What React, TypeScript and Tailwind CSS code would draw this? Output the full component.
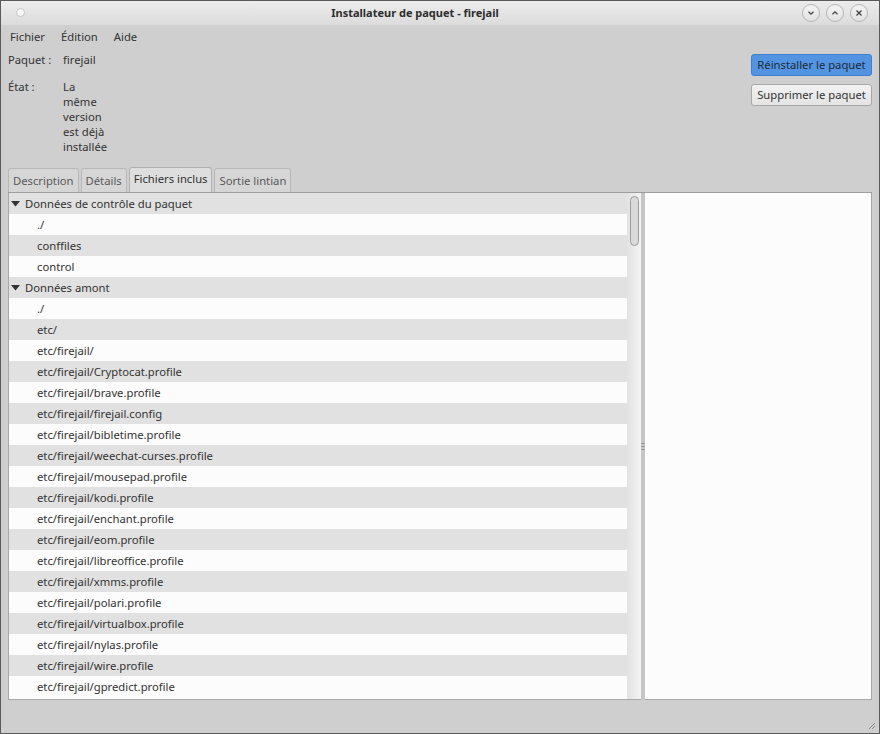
import React from "react";

const files = [
  "etc/firejail/Cryptocat.profile",
  "etc/firejail/brave.profile",
  "etc/firejail/firejail.config",
  "etc/firejail/bibletime.profile",
  "etc/firejail/weechat-curses.profile",
  "etc/firejail/mousepad.profile",
  "etc/firejail/kodi.profile",
  "etc/firejail/enchant.profile",
  "etc/firejail/eom.profile",
  "etc/firejail/libreoffice.profile",
  "etc/firejail/xmms.profile",
  "etc/firejail/polari.profile",
  "etc/firejail/virtualbox.profile",
  "etc/firejail/nylas.profile",
  "etc/firejail/wire.profile",
  "etc/firejail/gpredict.profile",
];

type Row = { text: string; header?: boolean };

const rows: Row[] = [
  { text: "Données de contrôle du paquet", header: true },
  { text: "./" },
  { text: "conffiles" },
  { text: "control" },
  { text: "Données amont", header: true },
  { text: "./" },
  { text: "etc/" },
  { text: "etc/firejail/" },
  ...files.map((f) => ({ text: f })),
];

function CircleBtn({ children }: { children: React.ReactNode }) {
  return (
    <div className="w-[18px] h-[18px] rounded-full border border-[#b5b5b5] bg-gradient-to-b from-[#f4f4f4] to-[#e2e2e2] flex items-center justify-center">
      {children}
    </div>
  );
}

export default function App() {
  return (
    <div
      className="w-[880px] h-[734px] bg-[#cfcfcf] border border-[#5a5a5a] flex flex-col text-[11.25px] text-[#333333] overflow-hidden"
      style={{ fontFamily: '"Noto Sans", "Open Sans", sans-serif' }}
    >
      {/* Title bar */}
      <div className="h-[24px] shrink-0 bg-gradient-to-b from-[#ececec] to-[#dcdcdc] flex items-center relative">
        <div className="absolute left-[15px] top-[7px] w-[9px] h-[9px] rounded-full bg-[#f8f8f8] border border-[#c4c4c4]" />
        <div className="flex-1 text-center font-bold text-[11px] text-[#2d2d2d] leading-[24px] pr-[50px]">
          Installateur de paquet - firejail
        </div>
        <div className="absolute right-[11px] top-[3px] flex gap-[6px]">
          <CircleBtn>
            <svg width="8" height="8" viewBox="0 0 8 8">
              <path d="M1.5 2.8 L4 5.2 L6.5 2.8" stroke="#444" strokeWidth="1.3" fill="none" />
            </svg>
          </CircleBtn>
          <CircleBtn>
            <svg width="8" height="8" viewBox="0 0 8 8">
              <path d="M1.5 5.2 L4 2.8 L6.5 5.2" stroke="#444" strokeWidth="1.3" fill="none" />
            </svg>
          </CircleBtn>
          <CircleBtn>
            <svg width="8" height="8" viewBox="0 0 8 8">
              <path d="M1.5 1.5 L6.5 6.5 M6.5 1.5 L1.5 6.5" stroke="#444" strokeWidth="1.3" fill="none" />
            </svg>
          </CircleBtn>
        </div>
      </div>

      {/* Menu */}
      <div className="h-[23px] shrink-0 flex items-center pt-[2px] pl-[9px] gap-[16px] text-[#333]">
        <span>Fichier</span>
        <span>Édition</span>
        <span>Aide</span>
      </div>

      {/* Info */}
      <div className="h-[119px] shrink-0 flex pl-[7px] pr-[7px]">
        <div className="flex-1 pt-[4px]">
          <div className="flex leading-[15px]">
            <span className="w-[55px]">Paquet :</span>
            <span>firejail</span>
          </div>
          <div className="flex leading-[15px] mt-[12px]">
            <span className="w-[55px]">État :</span>
            <div className="flex flex-col">
              <span>La</span>
              <span>même</span>
              <span>version</span>
              <span>est déjà</span>
              <span>installée</span>
            </div>
          </div>
        </div>
        <div className="flex flex-col gap-[8px] pt-[6px] w-[121px]">
          <button className="h-[22px] rounded-[3px] bg-[#5294e2] border border-[#3f7fcd] text-[#1f2a38] leading-[20px]">
            Réinstaller le paquet
          </button>
          <button className="h-[22px] rounded-[3px] bg-gradient-to-b from-[#f2f2f2] to-[#e4e4e4] border border-[#a8a8a8] text-[#333] leading-[20px]">
            Supprimer le paquet
          </button>
        </div>
      </div>

      {/* Tabs */}
      <div className="h-[25px] shrink-0 flex items-end pl-[7px] gap-[2px]">
        <div className="h-[24px] px-[4px] rounded-t-[3px] border border-b-0 border-[#b8b8b8] bg-[#d6d6d6] text-[#5a5a5a] leading-[23px]">
          Description
        </div>
        <div className="h-[24px] px-[4px] rounded-t-[3px] border border-b-0 border-[#b8b8b8] bg-[#d6d6d6] text-[#5a5a5a] leading-[23px]">
          Détails
        </div>
        <div className="h-[25px] px-[4px] rounded-t-[3px] border border-b-0 border-[#b0b0b0] bg-[#dedede] text-[#333] leading-[22px]">
          Fichiers inclus
        </div>
        <div className="h-[24px] px-[4px] rounded-t-[3px] border border-b-0 border-[#b8b8b8] bg-[#d6d6d6] text-[#5a5a5a] leading-[23px]">
          Sortie lintian
        </div>
      </div>

      {/* Panel */}
      <div className="h-[508px] shrink-0 mx-[7px] flex border-t border-[#9e9e9e]">
        <div className="w-[633px] flex border-l border-b border-[#a8a8a8] bg-[#fcfcfc] relative">
          <div className="w-[618px] flex flex-col">
            {rows.map((r, i) => (
              <div
                key={i}
                className={`h-[21px] shrink-0 flex items-center pt-[1px] ${i % 2 === 0 ? "bg-[#e1e1e1]" : "bg-[#fcfcfc]"}`}
              >
                {r.header ? (
                  <>
                    <svg width="9" height="6" viewBox="0 0 9 6" className="ml-[2px] mr-[5px]">
                      <path d="M0 0 L9 0 L4.5 5.5 Z" fill="#333" />
                    </svg>
                    <span>{r.text}</span>
                  </>
                ) : (
                  <span className="ml-[28px]">{r.text}</span>
                )}
              </div>
            ))}
          </div>
          <div className="flex-1 bg-gradient-to-r from-[#e2e2e2] to-[#f4f4f4] relative">
            <div className="absolute left-[3px] top-[3px] w-[9px] h-[50px] rounded-full border border-[#9c9c9c] bg-[#dadada]" />
          </div>
        </div>
        <div className="w-[4px] bg-[#c6c6c6] flex items-center justify-center">
          <div className="flex flex-col gap-[2px]">
            <div className="w-[4px] h-[1px] bg-[#9a9a9a]" />
            <div className="w-[4px] h-[1px] bg-[#9a9a9a]" />
            <div className="w-[4px] h-[1px] bg-[#9a9a9a]" />
          </div>
        </div>
        <div className="flex-1 bg-[#fcfcfc] border-r border-b border-[#a8a8a8]" />
      </div>

      <div className="flex-1 relative">
        <svg width="8" height="8" viewBox="0 0 8 8" className="absolute right-[3px] bottom-[3px]">
          <path d="M7 1 L1 7 M7 4 L4 7" stroke="#8a8a8a" strokeWidth="1" />
        </svg>
      </div>
    </div>
  );
}
